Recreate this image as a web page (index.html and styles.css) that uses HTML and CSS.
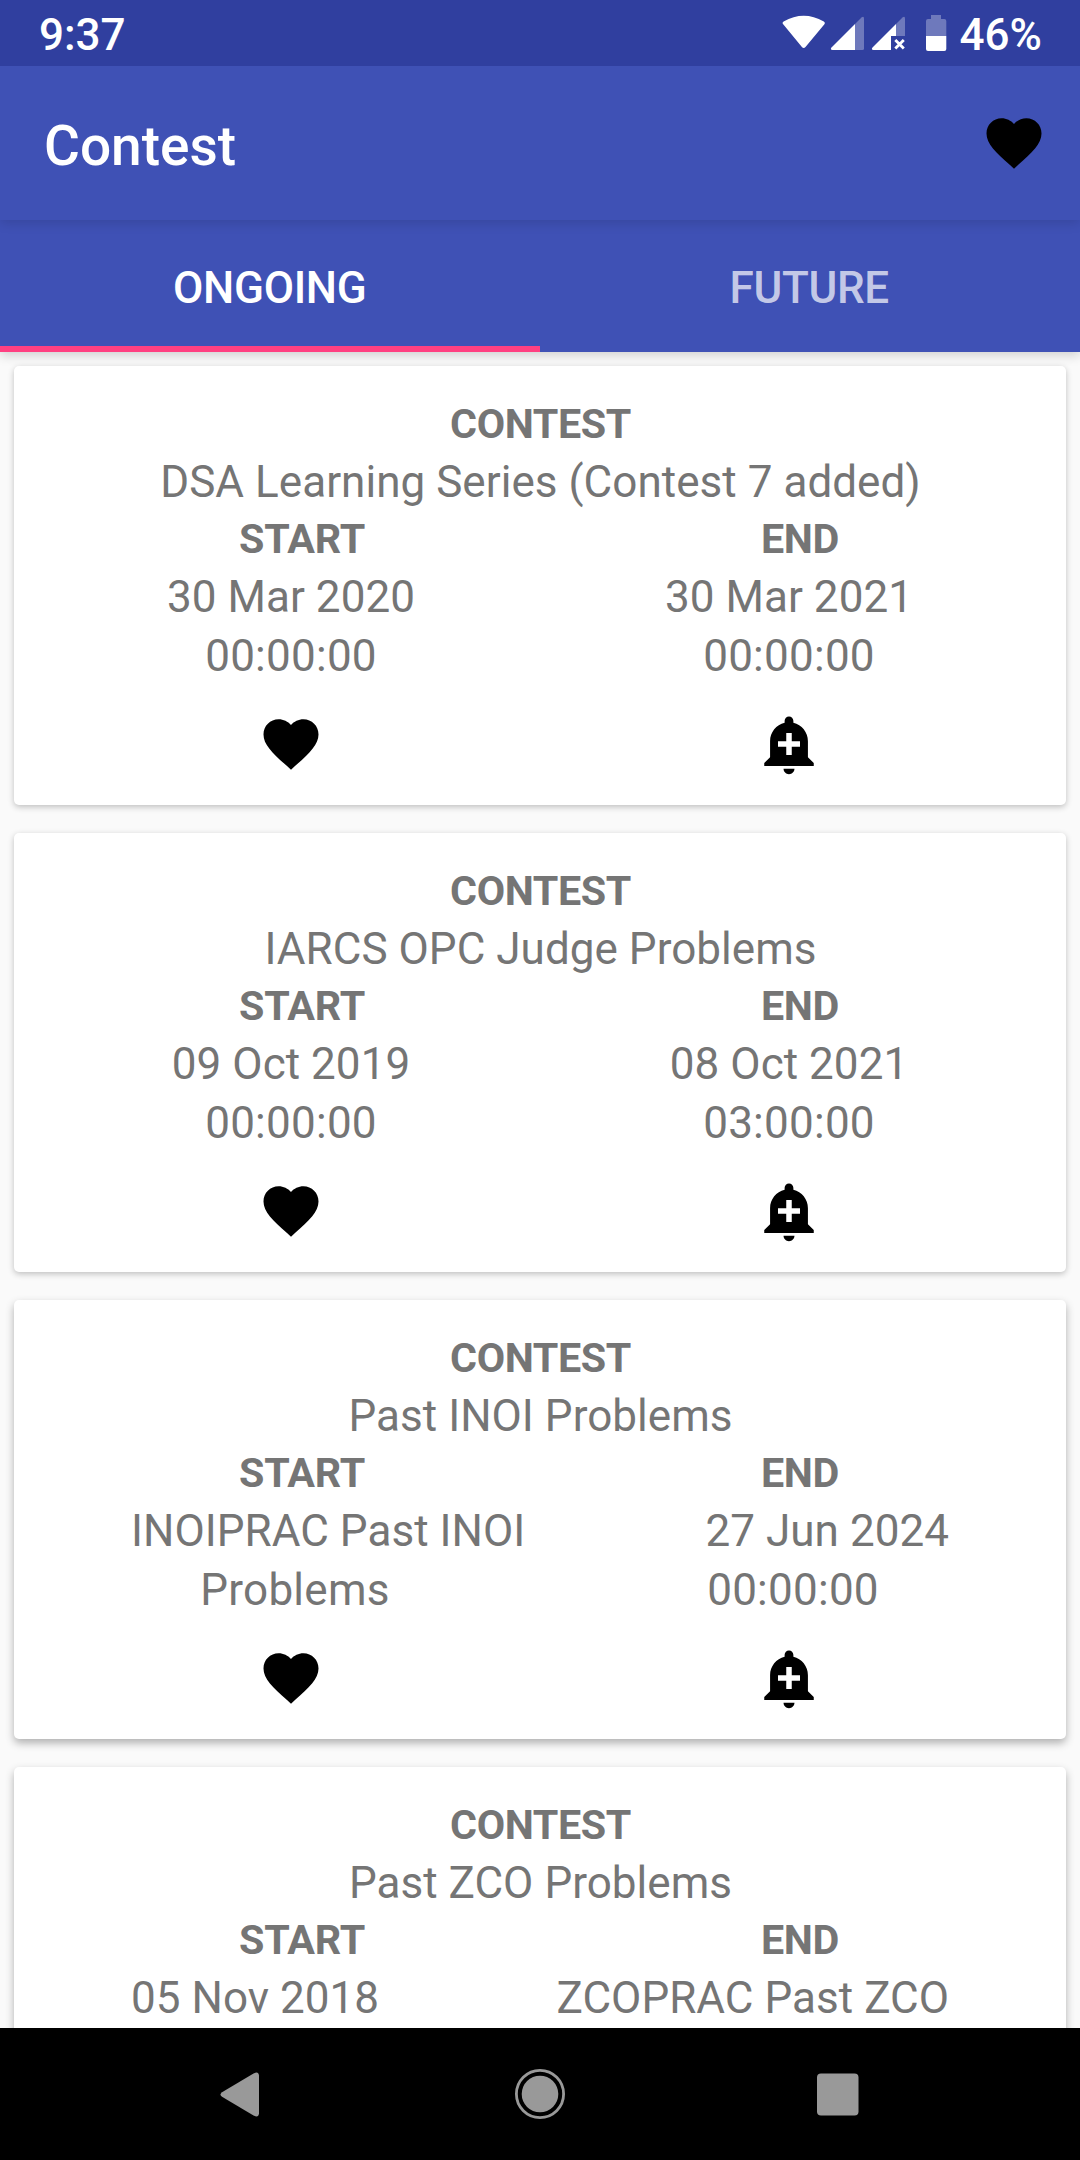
FILE: index.html
```html
<!DOCTYPE html>
<html lang="en">
<head>
<meta charset="utf-8">
<title>Contest</title>
<link rel="stylesheet" href="styles.css">
</head>
<body>
<svg class="defs" aria-hidden="true">
  <symbol id="heart" viewBox="0 0 24 24"><path d="M12 21.35l-1.45-1.32C5.4 15.36 2 12.28 2 8.5 2 5.42 4.42 3 7.5 3c1.74 0 3.41.81 4.5 2.09C13.09 3.81 14.76 3 16.5 3 19.58 3 22 5.42 22 8.5c0 3.78-3.4 6.86-8.55 11.54L12 21.35z"/></symbol>
  <symbol id="bell" viewBox="0 0 24 24"><path d="M10.01 21.01c0 1.1.89 1.99 1.99 1.99s1.99-.89 1.99-1.99h-3.98zm8.87-4.19V11c0-3.25-2.25-5.97-5.29-6.69v-.72C13.59 2.71 12.88 2 12 2s-1.59.71-1.59 1.59v.72C7.37 5.03 5.12 7.75 5.12 11v5.82L3 18.94V20h18v-1.06l-2.12-2.12zM16 13.01h-3v3h-2v-3H8V11h3V8h2v3h3v2.01z"/></symbol>
</svg>
<div class="screen">
  <header class="status">
    <span class="clock">9:37</span>
    <svg class="status-icons" width="170" height="66" viewBox="780 0 170 66" fill="#fff">
      <path d="M783.4 24.6C782.2 23.4 782.4 22.4 783.6 21.6Q803.7 9.8 823.8 21.6C825 22.4 825.200 23.400 824.200 24.600L805.500 47Q803.700 49 801.900 47Z"/>
      <path opacity=".3" d="M855 24L861.500 17.500Q864 15.700 864 18.500V48.500Q864 50 862.500 50H855Z"/>
      <path d="M855 24V50H832.500Q829.800 49.700 831.500 47.500Z"/>
      <path opacity=".3" d="M896 24L902.500 17.500Q905 15.700 905 18.500V36H896Z"/>
      <path d="M896 24V36H891V50H873.500Q870.800 49.700 872.500 47.500Z"/>
      <path d="M895.300 40L903.800 48.500M903.800 40L895.300 48.500" fill="none" stroke="#fff" stroke-width="2.800"/>
      <path opacity=".3" d="M926 36V21Q926 19 928 19H931V15H941V19H944.300Q946.300 19 946.300 21V36Z"/>
      <path d="M926 36H946.300V49Q946.300 51 944.300 51H928Q926 51 926 49Z"/>
    </svg>
    <span class="battery">46%</span>
  </header>
  <div class="toolbar">
    <h1 class="title">Contest</h1>
    <svg class="icon"><use href="#heart"/></svg>
  </div>
  <nav class="tabs">
    <div class="tab tab-active">ONGOING</div>
    <div class="tab">FUTURE</div>
  </nav>
  <main class="list">
    <article class="card">
      <div class="label">CONTEST</div>
      <div class="name">DSA Learning Series (Contest 7 added)</div>
      <div class="row heads"><span>START</span><span>END</span></div>
      <div class="row"><span>30 Mar 2020</span><span>30 Mar 2021</span></div>
      <div class="row times"><span>00:00:00</span><span>00:00:00</span></div>
      <div class="row actions"><svg class="icon"><use href="#heart"/></svg><svg class="icon"><use href="#bell"/></svg></div>
    </article>
    <article class="card">
      <div class="label">CONTEST</div>
      <div class="name">IARCS OPC Judge Problems</div>
      <div class="row heads"><span>START</span><span>END</span></div>
      <div class="row"><span>09 Oct 2019</span><span>08 Oct 2021</span></div>
      <div class="row times"><span>00:00:00</span><span>03:00:00</span></div>
      <div class="row actions"><svg class="icon"><use href="#heart"/></svg><svg class="icon"><use href="#bell"/></svg></div>
    </article>
    <article class="card card-low">
      <div class="label">CONTEST</div>
      <div class="name">Past INOI Problems</div>
      <div class="row heads"><span>START</span><span>END</span></div>
      <div class="spread"><span>INOIPRAC Past INOI</span><span>27 Jun 2024</span></div>
      <div class="row times wrapped"><span>Problems</span><span>00:00:00</span></div>
      <div class="row actions"><svg class="icon"><use href="#heart"/></svg><svg class="icon"><use href="#bell"/></svg></div>
    </article>
    <article class="card card-low">
      <div class="label">CONTEST</div>
      <div class="name">Past ZCO Problems</div>
      <div class="row heads"><span>START</span><span>END</span></div>
      <div class="spread"><span>05 Nov 2018</span><span>ZCOPRAC Past ZCO</span></div>
    </article>
  </main>
  <footer class="navbar">
    <svg width="66" height="66" viewBox="207 2061 66 66"><path d="M222 2092.200L253.500 2073.500Q258.500 2071 259 2075.500V2113.500Q258.500 2118 253.500 2115.500L222 2096.800Q219 2094.500 222 2092.200Z" fill="#999"/></svg>
    <svg width="66" height="66" viewBox="-33 -33 66 66"><circle r="18.300" fill="#999"/><circle r="23.600" fill="none" stroke="#999" stroke-width="2.800"/></svg>
    <svg width="66" height="66" viewBox="805 2061 66 66"><rect x="817" y="2073.500" width="41.500" height="42" rx="4" fill="#999"/></svg>
  </footer>
</div>
</body>
</html>
```
FILE: styles.css
```css
* { box-sizing: border-box; }
body { margin: 0; background: #fafafa; font-family: Roboto, sans-serif; }
.defs { position: absolute; width: 0; height: 0; }
.screen { width: 1080px; height: 2160px; display: flex; flex-direction: column; overflow: hidden; }

.status { flex: none; height: 66px; padding: 0 38px 0 39px; display: flex; align-items: center; background: #303f9f; color: #fff; font-size: 44px; font-weight: 500; line-height: 66px; position: relative; z-index: 4; }
.clock, .battery { padding-top: 3px; }
.status-icons { margin-left: auto; margin-right: 10px; }

.toolbar { flex: none; height: 154px; padding: 0 33px 0 44px; display: flex; align-items: center; justify-content: space-between; background: #3f51b5; color: #fff; position: relative; z-index: 3; box-shadow: 0 3px 11px rgba(0, 0, 0, .13); }
.title { margin: 0; font-size: 55px; font-weight: 500; line-height: 66px; padding-top: 6px; }
.icon { width: 66px; height: 66px; display: block; fill: #000; }

.tabs { flex: none; height: 132px; display: flex; background: #3f51b5; position: relative; z-index: 2; box-shadow: 0 3px 11px rgba(0, 0, 0, .18); }
.tab { flex: 1; text-align: center; font-size: 44px; font-weight: 500; letter-spacing: -.3px; line-height: 137px; color: rgba(255, 255, 255, .7); }
.tab:last-child { padding-right: 1px; }
.tab-active { color: #fff; border-bottom: 6px solid #ff4081; }

.list { flex: 1; min-height: 0; overflow: hidden; padding: 14px; display: flex; flex-direction: column; gap: 28px; color: #757575; font-size: 44px; letter-spacing: .04px; }
.card { flex: none; height: 439px; padding: 29px 28px 28px; background: #fff; border-radius: 5px; box-shadow: 0 2px 6px rgba(0, 0, 0, .24); }
.card-low { box-shadow: 0 4px 8px rgba(0, 0, 0, .3); }
.label { text-align: center; font-size: 41.250px; font-weight: 700; letter-spacing: -.4px; line-height: 58px; padding-left: 1px; }
.name { text-align: center; line-height: 58px; padding-left: 1px; }
.row { display: grid; grid-template-columns: 1fr 1fr; justify-items: center; line-height: 59px; }
.heads { font-size: 41.250px; font-weight: 700; letter-spacing: -.3px; line-height: 57px; }
.heads span { padding-left: 22px; }
.times { letter-spacing: .25px; }
.spread { display: flex; justify-content: space-between; padding: 0 89px; line-height: 59px; }
.wrapped span { padding-left: 8px; }
.actions { padding-top: 25px; }

.navbar { flex: none; height: 132px; padding: 0 209px 0 207px; display: flex; align-items: center; justify-content: space-between; background: #000; }
.navbar svg:nth-child(2) { margin-left: 2px; }
```
